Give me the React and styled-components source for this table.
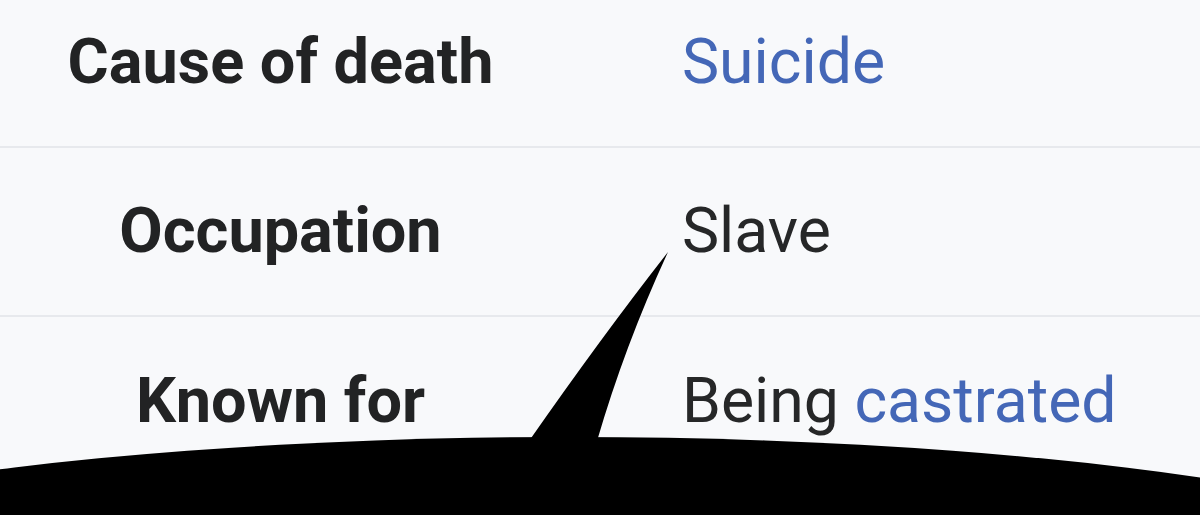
import React from "react";
import styled, { createGlobalStyle } from "styled-components";

const Global = createGlobalStyle`
  html, body { margin: 0; padding: 0; background: #f8f9fb; }
  body { width: 1200px; height: 515px; overflow: hidden; font-family: Roboto, "Liberation Sans", sans-serif; }
`;

const Page = styled.div`
  position: relative;
  width: 1200px;
  height: 515px;
  overflow: hidden;
  background: #f8f9fb;
`;

const Table = styled.div`
  display: flex;
  flex-direction: column;
  margin-top: -21px;
`;

const Row = styled.div`
  display: grid;
  grid-template-columns: 561px 1fr;
  align-items: center;
  height: 169px;
  box-sizing: border-box;
  border-bottom: ${(p) => (p.$last ? "none" : "2px solid #e7e9ed")};
`;

const Label = styled.div`
  text-align: center;
  font-weight: 700;
  font-size: 63px;
  color: #222324;
  padding-bottom: 3px;
`;

const Value = styled.div`
  padding-left: 121px;
  font-size: 62.5px;
  color: #262728;
  padding-bottom: 3px;
`;

const Link = styled.span`
  color: #4467b7;
`;

const Overlay = styled.svg`
  position: absolute;
  left: 0;
  top: 0;
  width: 1200px;
  height: 515px;
  pointer-events: none;
`;

const rows = [
  { label: "Cause of death", value: <Link>Suicide</Link> },
  { label: "Occupation", value: "Slave" },
  { label: "Known for", value: <>Being <Link>castrated</Link></> },
];

export default function App() {
  return (
    <Page>
      <Global />
      <Table>
        {rows.map((r, i) => (
          <Row key={r.label} $last={i === rows.length - 1}>
            <Label>{r.label}</Label>
            <Value>{r.value}</Value>
          </Row>
        ))}
      </Table>
      <Overlay viewBox="0 0 1200 515">
        <ellipse cx="570" cy="618" rx="1000" ry="181" fill="#000" />
        <path d="M529 441 Q 603 335 668 252 Q 625 345 597 441 Z" fill="#000" />
      </Overlay>
    </Page>
  );
}
